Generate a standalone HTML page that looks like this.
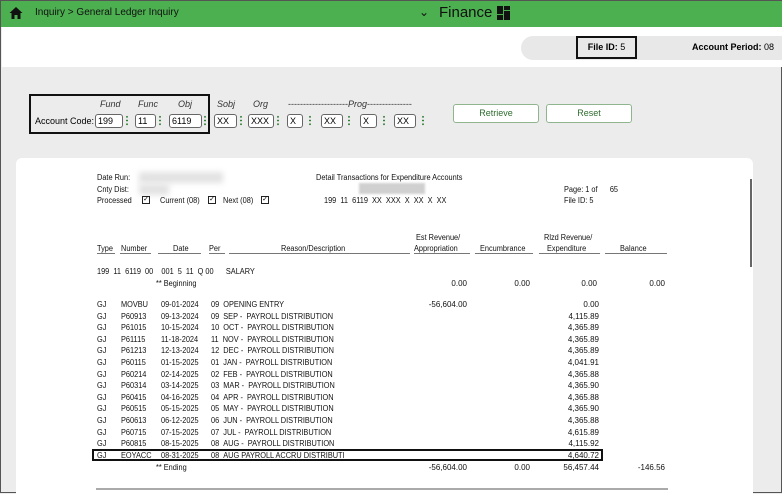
<!DOCTYPE html>
<html><head><style>
*{margin:0;padding:0;box-sizing:border-box}
body{width:782px;height:493px;overflow:hidden;background:#ececec;font-family:"Liberation Sans",sans-serif;position:relative;border:1px solid #555}
.a{position:absolute;white-space:nowrap}
.r{font-size:8px;color:#111;transform:scaleX(.92);transform-origin:left top}
.rr{font-size:8px;color:#111;text-align:right}
.in{position:absolute;height:14px;border:1px solid #666;border-radius:3px;background:#fff;font-size:9px;padding:1px 2px;top:113px}
.dots{position:absolute;top:114px;width:2px;height:11px;background:radial-gradient(circle,#2e7d32 0.8px,transparent 1px) 0 0/2px 3.7px}
.lbl{position:absolute;top:98px;font-size:9px;font-style:italic;color:#333}
.btn{position:absolute;top:103px;height:19px;border:1px solid #8fb58f;border-radius:3px;background:#fff;color:#2e6b2e;font-size:9px;text-align:center;line-height:17px}
.ul{position:absolute;top:252px;height:1px;background:#777}
.cb{position:absolute;top:195px;width:8px;height:8px;border:1px solid #222;font-size:7px;line-height:6px;text-align:center}
</style></head><body>
<div class="a" style="left:0;top:0;width:782px;height:26px;background:#4caf50"></div>
<svg class="a" style="left:8px;top:5px" width="14" height="14" viewBox="0 0 14 14"><path d="M7 1L0.5 7H2.5V13H5.5V9H8.5V13H11.5V7H13.5Z" fill="#111"/></svg>
<div class="a" style="left:34px;top:6px;font-size:10px;color:#111">Inquiry &gt; General Ledger Inquiry</div>
<div class="a" style="left:418px;top:4px;font-size:12px;color:#111">&#8964;</div>
<div class="a" style="left:438px;top:3px;font-size:15px;color:#111">Finance</div>
<svg class="a" style="left:496px;top:5px" width="13" height="14"><rect x="0" y="0" width="6" height="8" fill="#111"/><rect x="7" y="0" width="6" height="4" fill="#111"/><rect x="7" y="5" width="6" height="9" fill="#111"/><rect x="0" y="9" width="6" height="5" fill="#111"/></svg>
<div class="a" style="left:1px;top:26px;width:780px;height:40px;background:#fff"></div>
<div class="a" style="left:520px;top:35px;width:262px;height:24px;background:#e8e8e8;border-radius:12px 0 0 12px"></div>
<div class="a" style="left:575px;top:35px;width:61px;height:23px;border:2px solid #111;font-size:9px;line-height:19px;text-align:center"><b>File ID:</b> 5</div>
<div class="a" style="left:691px;top:41px;font-size:9px"><b>Account Period:</b> 08</div>

<div class="a" style="left:28px;top:93px;width:181px;height:40px;border:2px solid #111"></div>
<div class="lbl" style="left:99px">Fund</div><div class="lbl" style="left:137px">Func</div><div class="lbl" style="left:177px">Obj</div><div class="lbl" style="left:216px">Sobj</div><div class="lbl" style="left:252px">Org</div>
<div class="lbl" style="left:287px;font-style:normal">--------------------<i>Prog</i>---------------</div>
<div class="a" style="left:34px;top:115px;font-size:9px">Account Code:</div>
<div class="in" style="left:94px;width:28px">199</div><div class="dots" style="left:125px"></div>
<div class="in" style="left:134px;width:21px">11</div><div class="dots" style="left:158px"></div>
<div class="in" style="left:168px;width:33px">6119</div><div class="dots" style="left:203px"></div>
<div class="in" style="left:213px;width:23px">XX</div><div class="dots" style="left:239px"></div>
<div class="in" style="left:247px;width:26px">XXX</div><div class="dots" style="left:276px"></div>
<div class="in" style="left:286px;width:16px">X</div><div class="dots" style="left:308px"></div>
<div class="in" style="left:320px;width:22px">XX</div><div class="dots" style="left:347px"></div>
<div class="in" style="left:359px;width:17px">X</div><div class="dots" style="left:382px"></div>
<div class="in" style="left:393px;width:22px">XX</div><div class="dots" style="left:421px"></div>
<div class="btn" style="left:452px;width:86px">Retrieve</div>
<div class="btn" style="left:545px;width:86px">Reset</div>

<div class="a" style="left:15px;top:157px;width:737px;height:336px;background:#fff;border-radius:6px 6px 0 0"></div>
<div class="a" style="left:749px;top:178px;width:2px;height:88px;background:#666"></div>
<div class="a r" style="left:96px;top:172px">Date Run:</div>
<div class="a" style="left:138px;top:171px;width:84px;height:11px;background:#e2e2e2;filter:blur(3px)"></div>
<div class="a r" style="left:96px;top:184px">Cnty Dist:</div>
<div class="a" style="left:138px;top:183px;width:30px;height:11px;background:#e2e2e2;filter:blur(3px)"></div>
<div class="a r" style="left:96px;top:195px">Processed</div><div class="cb" style="left:141px">&#10003;</div>
<div class="a r" style="left:159px;top:195px">Current (08)</div><div class="cb" style="left:207px">&#10003;</div>
<div class="a r" style="left:222px;top:195px">Next (08)</div><div class="cb" style="left:260px">&#10003;</div>
<div class="a r" style="left:315px;top:172px">Detail Transactions for Expenditure Accounts</div>
<div class="a" style="left:358px;top:182px;width:66px;height:11px;background:#d0d0d0;filter:blur(1px)"></div>
<div class="a r" style="left:323px;top:195px">199 &nbsp;11 &nbsp;6119 &nbsp;XX &nbsp;XXX &nbsp;X &nbsp;XX &nbsp;X &nbsp;XX</div>
<div class="a r" style="left:563px;top:184px">Page: 1 of &nbsp;&nbsp;&nbsp;&nbsp;&nbsp;65</div>
<div class="a r" style="left:563px;top:195px">File ID: 5</div>

<div class="a r" style="left:96px;top:243px">Type</div><div class="ul" style="left:96px;width:18px"></div>
<div class="a r" style="left:120px;top:243px">Number</div><div class="ul" style="left:119px;width:31px"></div>
<div class="a r" style="left:172px;top:243px">Date</div><div class="ul" style="left:157px;width:43px"></div>
<div class="a r" style="left:208px;top:243px">Per</div><div class="ul" style="left:208px;width:16px"></div>
<div class="a r" style="left:280px;top:243px">Reason/Description</div><div class="ul" style="left:228px;width:181px"></div>
<div class="a r" style="left:415px;top:232px">Est Revenue/</div><div class="a r" style="left:413px;top:243px">Appropriation</div><div class="ul" style="left:413px;width:56px"></div>
<div class="a r" style="left:479px;top:243px">Encumbrance</div><div class="ul" style="left:474px;width:58px"></div>
<div class="a r" style="left:543px;top:232px">Rlzd Revenue/</div><div class="a r" style="left:546px;top:243px">Expenditure</div><div class="ul" style="left:538px;width:61px"></div>
<div class="a r" style="left:619px;top:243px">Balance</div><div class="ul" style="left:604px;width:62px"></div>

<div class="a r" style="left:96px;top:266px">199 &nbsp;11 &nbsp;6119 &nbsp;00 &nbsp;&nbsp;&nbsp;001 &nbsp;5 &nbsp;11 &nbsp;Q 00 &nbsp;&nbsp;&nbsp;&nbsp;&nbsp;SALARY</div>
<div class="a r" style="left:155px;top:278px">** Beginning</div>
<div class="a rr" style="right:314px;top:278px">0.00</div><div class="a rr" style="right:251px;top:278px">0.00</div><div class="a rr" style="right:184px;top:278px">0.00</div><div class="a rr" style="right:116px;top:278px">0.00</div>

<div class="a r" style="left:96px;top:298px;line-height:11.6px">GJ<br>GJ<br>GJ<br>GJ<br>GJ<br>GJ<br>GJ<br>GJ<br>GJ<br>GJ<br>GJ<br>GJ<br>GJ<br>GJ</div>
<div class="a r" style="left:120px;top:298px;line-height:11.6px">MOVBU<br>P60913<br>P61015<br>P61115<br>P61213<br>P60115<br>P60214<br>P60314<br>P60415<br>P60515<br>P60613<br>P60715<br>P60815<br>EOYACC</div>
<div class="a r" style="left:160px;top:298px;line-height:11.6px">09-01-2024<br>09-13-2024<br>10-15-2024<br>11-18-2024<br>12-13-2024<br>01-15-2025<br>02-14-2025<br>03-14-2025<br>04-16-2025<br>05-15-2025<br>06-12-2025<br>07-15-2025<br>08-15-2025<br>08-31-2025</div>
<div class="a r" style="left:210px;top:298px;line-height:11.6px">09 &nbsp;OPENING ENTRY<br>09 &nbsp;SEP - &nbsp;PAYROLL DISTRIBUTION<br>10 &nbsp;OCT - &nbsp;PAYROLL DISTRIBUTION<br>11 &nbsp;NOV - &nbsp;PAYROLL DISTRIBUTION<br>12 &nbsp;DEC - &nbsp;PAYROLL DISTRIBUTION<br>01 &nbsp;JAN - &nbsp;PAYROLL DISTRIBUTION<br>02 &nbsp;FEB - &nbsp;PAYROLL DISTRIBUTION<br>03 &nbsp;MAR - &nbsp;PAYROLL DISTRIBUTION<br>04 &nbsp;APR - &nbsp;PAYROLL DISTRIBUTION<br>05 &nbsp;MAY - &nbsp;PAYROLL DISTRIBUTION<br>06 &nbsp;JUN - &nbsp;PAYROLL DISTRIBUTION<br>07 &nbsp;JUL - &nbsp;PAYROLL DISTRIBUTION<br>08 &nbsp;AUG - &nbsp;PAYROLL DISTRIBUTION<br>08 &nbsp;AUG PAYROLL ACCRU DISTRIBUTI</div>
<div class="a rr" style="right:314px;top:298px;line-height:11.6px">-56,604.00</div>
<div class="a rr" style="right:182px;top:298px;line-height:11.6px">0.00<br>4,115.89<br>4,365.89<br>4,365.89<br>4,365.89<br>4,041.91<br>4,365.88<br>4,365.90<br>4,365.88<br>4,365.90<br>4,365.88<br>4,615.89<br>4,115.92<br>4,640.72</div>
<div class="a" style="left:91px;top:448px;width:511px;height:12px;border:2px solid #111"></div>
<div class="a r" style="left:155px;top:462px">** Ending</div>
<div class="a rr" style="right:314px;top:462px">-56,604.00</div><div class="a rr" style="right:251px;top:462px">0.00</div><div class="a rr" style="right:182px;top:462px">56,457.44</div><div class="a rr" style="right:116px;top:462px">-146.56</div>
<div class="a" style="left:95px;top:487px;width:572px;height:2px;background:#aaa"></div>
</body></html>
